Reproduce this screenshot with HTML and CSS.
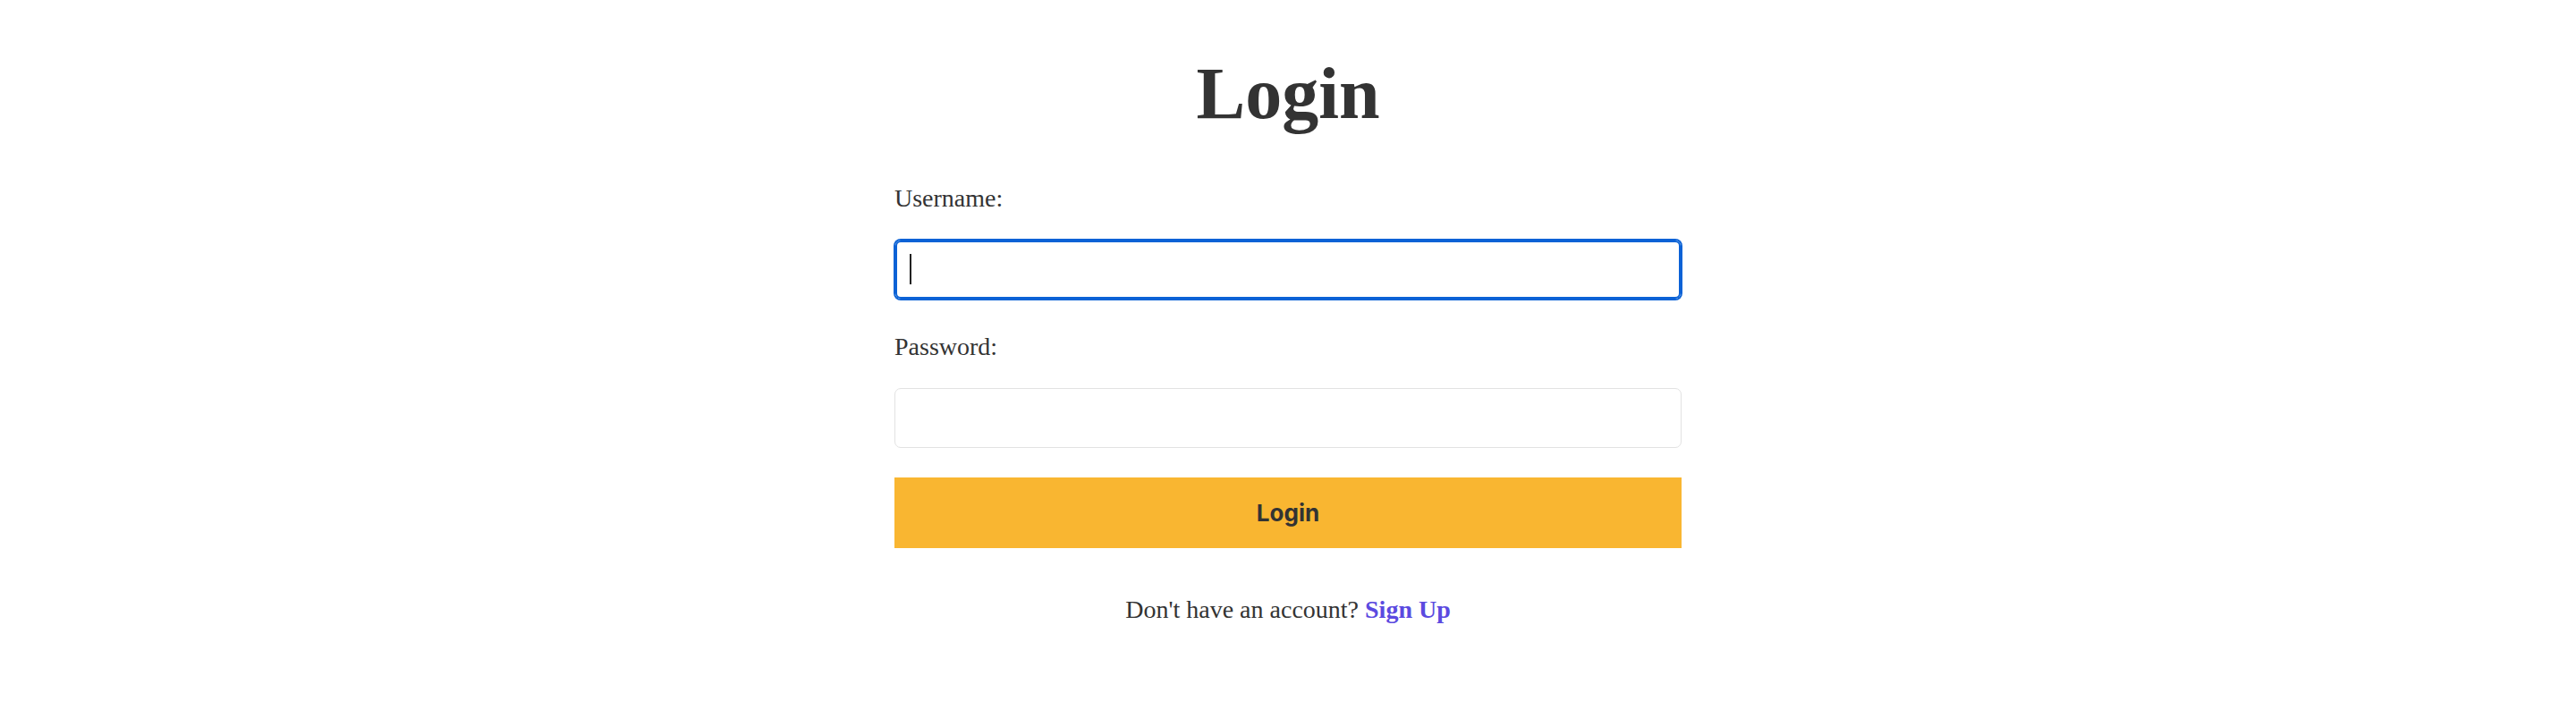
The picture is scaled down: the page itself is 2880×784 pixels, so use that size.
FILE: index.html
```html
<!DOCTYPE html>
<html lang="en">
<head>
<meta charset="utf-8">
<title>Login</title>
<link rel="stylesheet" href="styles.css">
</head>
<body>
<main class="login">
  <h1 class="title">Login</h1>
  <form class="form">
    <label class="label" for="username">Username:</label>
    <div class="field">
      <input class="input input-focused" id="username" type="text">
      <span class="caret"></span>
    </div>
    <label class="label" for="password">Password:</label>
    <div class="field">
      <input class="input" id="password" type="password">
    </div>
    <button class="button" type="button">Login</button>
  </form>
  <p class="footer">Don't have an account? <a class="link" href="#">Sign Up</a></p>
</main>
</body>
</html>
```
FILE: styles.css
```css
html, body {
  margin: 0;
  padding: 0;
  background: #ffffff;
}

body {
  font-family: "Liberation Serif", "DejaVu Serif", serif;
  color: #333333;
}

.login {
  width: 880px;
  margin: 0 auto;
  padding-top: 58px;
  display: flex;
  flex-direction: column;
}

.title {
  margin: 0 0 54px 0;
  font-size: 82px;
  line-height: 94px;
  font-weight: 700;
  text-align: center;
  color: #333333;
}

.form {
  display: flex;
  flex-direction: column;
}

.label {
  font-size: 28px;
  line-height: 32px;
  margin-bottom: 30px;
  color: #333333;
}

.field {
  position: relative;
  margin-bottom: 37px;
}

.field:last-of-type {
  margin-bottom: 33px;
}

.input {
  display: block;
  box-sizing: border-box;
  width: 100%;
  height: 67px;
  padding: 0 16px;
  border: 1px solid #e2e2e2;
  border-radius: 7px;
  background: #ffffff;
  font-family: "Liberation Serif", serif;
  font-size: 28px;
  outline: none;
}

.input-focused {
  border-color: #0b62d6;
  box-shadow: 0 0 0 1px #0b62d6, inset 0 0 0 2px #0b62d6;
}

.caret {
  position: absolute;
  left: 17px;
  top: 16px;
  width: 2px;
  height: 34px;
  background: #222222;
}

.button {
  height: 79px;
  border: none;
  background: #f9b631;
  color: #333333;
  font-family: "Inter", "Roboto", sans-serif;
  font-weight: 700;
  font-size: 26px;
  cursor: pointer;
}

.footer {
  margin: 53px 0 0 0;
  font-size: 28px;
  line-height: 32px;
  text-align: center;
  color: #333333;
}

.link {
  color: #5b4ae0;
  font-weight: 700;
  text-decoration: none;
}
```
